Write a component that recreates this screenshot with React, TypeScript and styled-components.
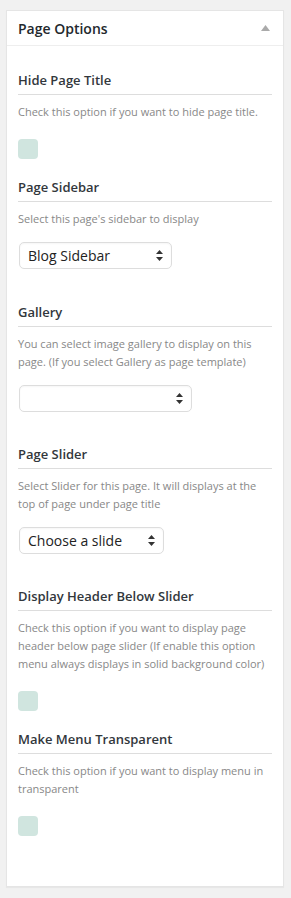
import React from "react";
import styled, { createGlobalStyle } from "styled-components";

const GlobalStyle = createGlobalStyle`
  body {
    margin: 0;
    background: #f1f1f1;
    font-family: "Open Sans", "Noto Sans", sans-serif;
  }
`;

const Page = styled.div`
  padding: 10px 7px 11px 6px;
`;

const Panel = styled.div`
  background: #fff;
  border: 1px solid #e5e5e5;
  box-shadow: 0 1px 1px rgba(0, 0, 0, 0.04);
`;

const PanelHeader = styled.div`
  display: flex;
  align-items: center;
  justify-content: space-between;
  height: 34px;
  padding: 0 13px 0 11px;
  border-bottom: 1px solid #eee;
`;

const PanelTitle = styled.h2`
  margin: 0;
  font-size: 14px;
  font-weight: 600;
  color: #23282d;
`;

const PanelBody = styled.div`
  padding: 24px 11px 50px 11px;
`;

const Field = styled.div<{ after: number }>`
  margin-bottom: ${(p) => p.after}px;
`;

const FieldTitle = styled.h4`
  margin: 0;
  font-size: 13px;
  font-weight: 600;
  line-height: 20px;
  color: #32373c;
  padding-bottom: 4px;
  border-bottom: 1px solid #ddd;
`;

const FieldDesc = styled.p`
  margin: 8px 0 0;
  font-size: 11px;
  line-height: 18px;
  color: #888;
`;

const Checkbox = styled.div`
  margin-top: 18px;
  width: 20px;
  height: 20px;
  border-radius: 4px;
  background: #d0e5df;
`;

const SelectBox = styled.div<{ width: number }>`
  margin-top: 14px;
  margin-left: 1px;
  box-sizing: border-box;
  width: ${(p) => p.width}px;
  height: 27px;
  display: flex;
  align-items: center;
  justify-content: space-between;
  padding: 0 8px 0 8px;
  border: 1px solid #ddd;
  border-radius: 5px;
  box-shadow: inset 0 1px 2px rgba(0, 0, 0, 0.04);
  font-size: 14px;
  color: #222;
`;

const Arrows = () => (
  <svg width="7" height="11" viewBox="0 0 7 11">
    <path d="M3.5 0 L7 4 L0 4 Z" fill="#333" />
    <path d="M3.5 11 L7 7 L0 7 Z" fill="#333" />
  </svg>
);

const CollapseIcon = () => (
  <svg width="9" height="6" viewBox="0 0 9 6">
    <path d="M4.5 0 L9 6 L0 6 Z" fill="#aaa" />
  </svg>
);

type Item =
  | { title: string; desc: string; kind: "check"; after: number }
  | { title: string; desc: string; kind: "select"; value: string; width: number; after: number };

const items: Item[] = [
  { title: "Hide Page Title", desc: "Check this option if you want to hide page title.", kind: "check", after: 18 },
  { title: "Page Sidebar", desc: "Select this page's sidebar to display", kind: "select", value: "Blog Sidebar", width: 153, after: 33 },
  { title: "Gallery", desc: "You can select image gallery to display on this page. (If you select Gallery as page template)", kind: "select", value: "", width: 173, after: 32 },
  { title: "Page Slider", desc: "Select Slider for this page. It will displays at the top of page under page title", kind: "select", value: "Choose a slide", width: 145, after: 32 },
  { title: "Display Header Below Slider", desc: "Check this option if you want to display page header below page slider (If enable this option menu always displays in solid background color)", kind: "check", after: 18 },
  { title: "Make Menu Transparent", desc: "Check this option if you want to display menu in transparent", kind: "check", after: 0 },
];

export default function App() {
  return (
    <Page>
      <GlobalStyle />
      <Panel>
        <PanelHeader>
          <PanelTitle>Page Options</PanelTitle>
          <CollapseIcon />
        </PanelHeader>
        <PanelBody>
          {items.map((item) => (
            <Field key={item.title} after={item.after}>
              <FieldTitle>{item.title}</FieldTitle>
              <FieldDesc>{item.desc}</FieldDesc>
              {item.kind === "check" ? (
                <Checkbox />
              ) : (
                <SelectBox width={item.width}>
                  <span>{item.value}</span>
                  <Arrows />
                </SelectBox>
              )}
            </Field>
          ))}
        </PanelBody>
      </Panel>
    </Page>
  );
}
